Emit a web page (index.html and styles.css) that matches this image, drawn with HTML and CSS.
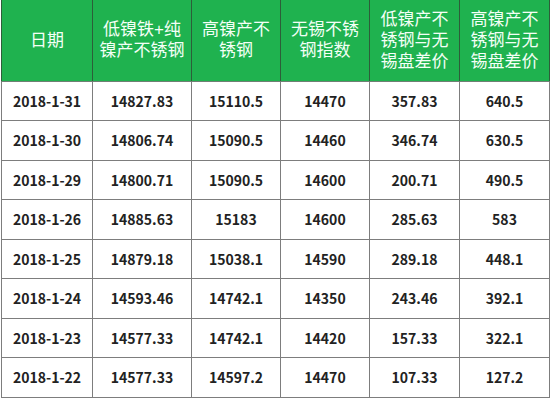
FILE: index.html
```html
<!DOCTYPE html>
<html lang="zh-CN">
<head>
<meta charset="utf-8">
<link rel="stylesheet" href="styles.css">
</head>
<body>
<table class="grid">
  <colgroup>
    <col class="c1"><col class="c2"><col class="c3"><col class="c4"><col class="c5"><col class="c6">
  </colgroup>
  <thead>
    <tr class="head">
      <th>日期</th>
      <th>低镍铁+纯<br>镍产不锈钢</th>
      <th>高镍产不<br>锈钢</th>
      <th>无锡不锈<br>钢指数</th>
      <th>低镍产不<br>锈钢与无<br>锡盘差价</th>
      <th>高镍产不<br>锈钢与无<br>锡盘差价</th>
    </tr>
  </thead>
  <tbody>
    <tr><td>2018-1-31</td><td>14827.83</td><td>15110.5</td><td>14470</td><td>357.83</td><td>640.5</td></tr>
    <tr><td>2018-1-30</td><td>14806.74</td><td>15090.5</td><td>14460</td><td>346.74</td><td>630.5</td></tr>
    <tr><td>2018-1-29</td><td>14800.71</td><td>15090.5</td><td>14600</td><td>200.71</td><td>490.5</td></tr>
    <tr><td>2018-1-26</td><td>14885.63</td><td>15183</td><td>14600</td><td>285.63</td><td>583</td></tr>
    <tr><td>2018-1-25</td><td>14879.18</td><td>15038.1</td><td>14590</td><td>289.18</td><td>448.1</td></tr>
    <tr><td>2018-1-24</td><td>14593.46</td><td>14742.1</td><td>14350</td><td>243.46</td><td>392.1</td></tr>
    <tr><td>2018-1-23</td><td>14577.33</td><td>14742.1</td><td>14420</td><td>157.33</td><td>322.1</td></tr>
    <tr><td>2018-1-22</td><td>14577.33</td><td>14597.2</td><td>14470</td><td>107.33</td><td>127.2</td></tr>
  </tbody>
</table>
</body>
</html>
```
FILE: styles.css
```css
html, body {
  margin: 0;
  padding: 0;
  background: #ffffff;
}
body {
  padding: 0 0 0 1px;
  font-family: "Noto Sans CJK SC", "Noto Sans", sans-serif;
}
.grid {
  border-collapse: collapse;
  table-layout: fixed;
  width: 549px;
}
.c1 { width: 91px; }
.c2 { width: 99px; }
.c3 { width: 89px; }
.c4 { width: 89px; }
.c5 { width: 90px; }
.c6 { width: 90px; }
.head {
  height: 81px;
}
.grid th {
  padding: 0;
  background: #1fb24f;
  color: #f4fff6;
  font-family: "Liberation Sans", "Noto Sans CJK SC", sans-serif;
  font-weight: 400;
  font-size: 17px;
  line-height: 21px;
  text-align: center;
  vertical-align: middle;
  border-left: 1px solid #2d5e39;
  border-right: 1px solid #2d5e39;
  border-bottom: 1px solid #6f7f74;
}
.grid tbody tr {
  height: 39.5px;
}
.grid td {
  padding: 0;
  color: #222222;
  font-weight: 700;
  font-size: 14px;
  text-align: center;
  vertical-align: middle;
  border: 1px solid #7d7d7d;
}
```
